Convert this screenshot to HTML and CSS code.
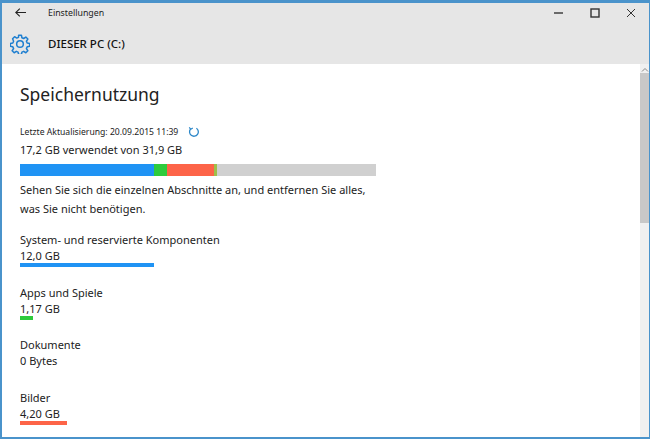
FILE: index.html
```html
<!DOCTYPE html>
<html lang="de">
<head>
<meta charset="utf-8">
<title>Einstellungen</title>
<link rel="stylesheet" href="styles.css">
</head>
<body>
<div class="window">
  <header class="chrome">
    <div class="titlebar">
      <svg class="back" viewBox="0 0 11 9" width="11" height="9"><path d="M4.8.6.8 4.5l4 3.9M.8 4.5H11" fill="none" stroke="#222" stroke-width="1.1"/></svg>
      <span class="apptitle">Einstellungen</span>
      <div class="controls">
        <svg class="ctl" viewBox="0 0 10 10" width="10" height="10"><path d="M0 5h9" stroke="#333" stroke-width="1.4"/></svg>
        <svg class="ctl" viewBox="0 0 10 10" width="10" height="10"><rect x="1" y="1" width="8" height="8" fill="none" stroke="#333" stroke-width="1.4"/></svg>
        <svg class="ctl" viewBox="0 0 10 10" width="10" height="10"><path d="M1 1l8 8M9 1l-8 8" stroke="#333" stroke-width="1"/></svg>
      </div>
    </div>
    <div class="pagebar">
      <svg class="gear" viewBox="0 0 24 24" width="20" height="20"><path d="M10.3 1.5h3.4l.6 3 2.1.9 2.6-1.7 2.4 2.4-1.7 2.6.9 2.1 3 .6v3.4l-3 .6-.9 2.1 1.7 2.6-2.4 2.4-2.6-1.7-2.1.9-.6 3h-3.4l-.6-3-2.1-.9-2.6 1.7-2.4-2.4 1.7-2.6-.9-2.1-3-.6v-3.4l3-.6.9-2.1L3.1 5.6l2.4-2.4 2.6 1.7 2.1-.9z" fill="none" stroke="#1f7fd0" stroke-width="1.8" stroke-linejoin="round"/><circle cx="12" cy="12" r="4" fill="none" stroke="#1f7fd0" stroke-width="1.8"/></svg>
      <span class="pagetitle">DIESER PC (C:)</span>
    </div>
  </header>
  <div class="body">
    <main class="content">
      <h1>Speichernutzung</h1>
      <div class="updated"><span>Letzte Aktualisierung: 20.09.2015 11:39</span>
        <svg class="refresh" viewBox="0 0 12 12" width="12" height="12"><path d="M8.4 2.2A4.4 4.4 0 1 1 2.6 3" fill="none" stroke="#2a86c8" stroke-width="1.3"/><path d="M1.2 1.4l1.6 1.8 2-1.2" fill="none" stroke="#2a86c8" stroke-width="1.1"/></svg>
      </div>
      <div class="usage">17,2 GB verwendet von 31,9 GB</div>
      <div class="bar">
        <i class="seg sys" style="width:134px"></i><i class="seg app" style="width:13px"></i><i class="seg pic" style="width:47px"></i><i class="seg oth" style="width:3px"></i>
      </div>
      <p class="hint">Sehen Sie sich die einzelnen Abschnitte an, und entfernen Sie alles, was Sie nicht benötigen.</p>
      <div class="items">
        <section class="item"><div class="name">System- und reservierte Komponenten</div><div class="size">12,0 GB</div><div class="line sys" style="width:134px"></div></section>
        <section class="item"><div class="name">Apps und Spiele</div><div class="size">1,17 GB</div><div class="line app" style="width:13px"></div></section>
        <section class="item"><div class="name">Dokumente</div><div class="size">0 Bytes</div><div class="line"></div></section>
        <section class="item"><div class="name">Bilder</div><div class="size">4,20 GB</div><div class="line pic" style="width:47px"></div></section>
      </div>
    </main>
    <div class="scrollbar">
      <svg class="arrow" viewBox="0 0 8 5" width="8" height="5"><path d="M1 4l3-3 3 3" fill="none" stroke="#888" stroke-width="1"/></svg>
      <div class="thumb"></div>
    </div>
  </div>
</div>
</body>
</html>
```
FILE: styles.css
```css
* { box-sizing: border-box; }
html, body { margin: 0; padding: 0; }
body { width: 650px; height: 439px; overflow: hidden; font-family: "Noto Sans", "Open Sans", sans-serif; color: #222; }
.window { width: 650px; height: 439px; display: flex; flex-direction: column; border: 2px solid #4a93cb; border-top-width: 3px; border-right-width: 1px; background: #fff; }
.chrome { height: 61px; background: #e6e6e6; flex: none; }
.titlebar { height: 19px; display: flex; align-items: center; padding-left: 13px; }
.apptitle { font-size: 8.8px; margin-left: 22px; }
.controls { margin-left: auto; display: flex; gap: 26px; padding-right: 13px; }
.ctl { display: block; }
.pagebar { height: 42px; display: flex; align-items: center; padding-left: 8px; padding-top: 1px; }
.gear { flex: none; }
.pagetitle { font-size: 11.5px; font-weight: 500; margin-left: 18px; color: #111; }
.body { flex: 1; display: flex; min-height: 0; }
.content { flex: 1; padding: 16px 0 0 18px; overflow: hidden; }
h1 { margin: 0; font-size: 17.5px; font-weight: 400; line-height: 28px; color: #222; }
.updated { display: flex; align-items: center; margin-top: 17px; font-size: 8.65px; line-height: 14px; }
.refresh { margin-left: 10px; }
.usage { font-size: 11px; line-height: 17px; margin-top: 2px; }
.bar { width: 356px; height: 12px; margin-top: 6px; background: #d0d0d0; display: flex; }
.seg { display: block; height: 100%; }
.sys { background: #1f93f4; }
.app { background: #2ecb3c; }
.pic { background: #fd6448; }
.oth { background: #9fc04a; }
.hint { width: 358px; margin: 4px 0 0; font-size: 11px; line-height: 19px; }
.items { margin-top: 14px; display: flex; flex-direction: column; gap: 13px; }
.item { height: 39.5px; }
.name { font-size: 11px; line-height: 16px; }
.size { font-size: 11px; line-height: 15px; }
.line { height: 4px; }
.scrollbar { width: 9px; flex: none; background: #f0f0f0; display: flex; flex-direction: column; align-items: center; }
.arrow { margin-top: 3px; height: 6px; flex: none; }
.thumb { width: 100%; height: 150px; background: #c8c8c8; }
```
